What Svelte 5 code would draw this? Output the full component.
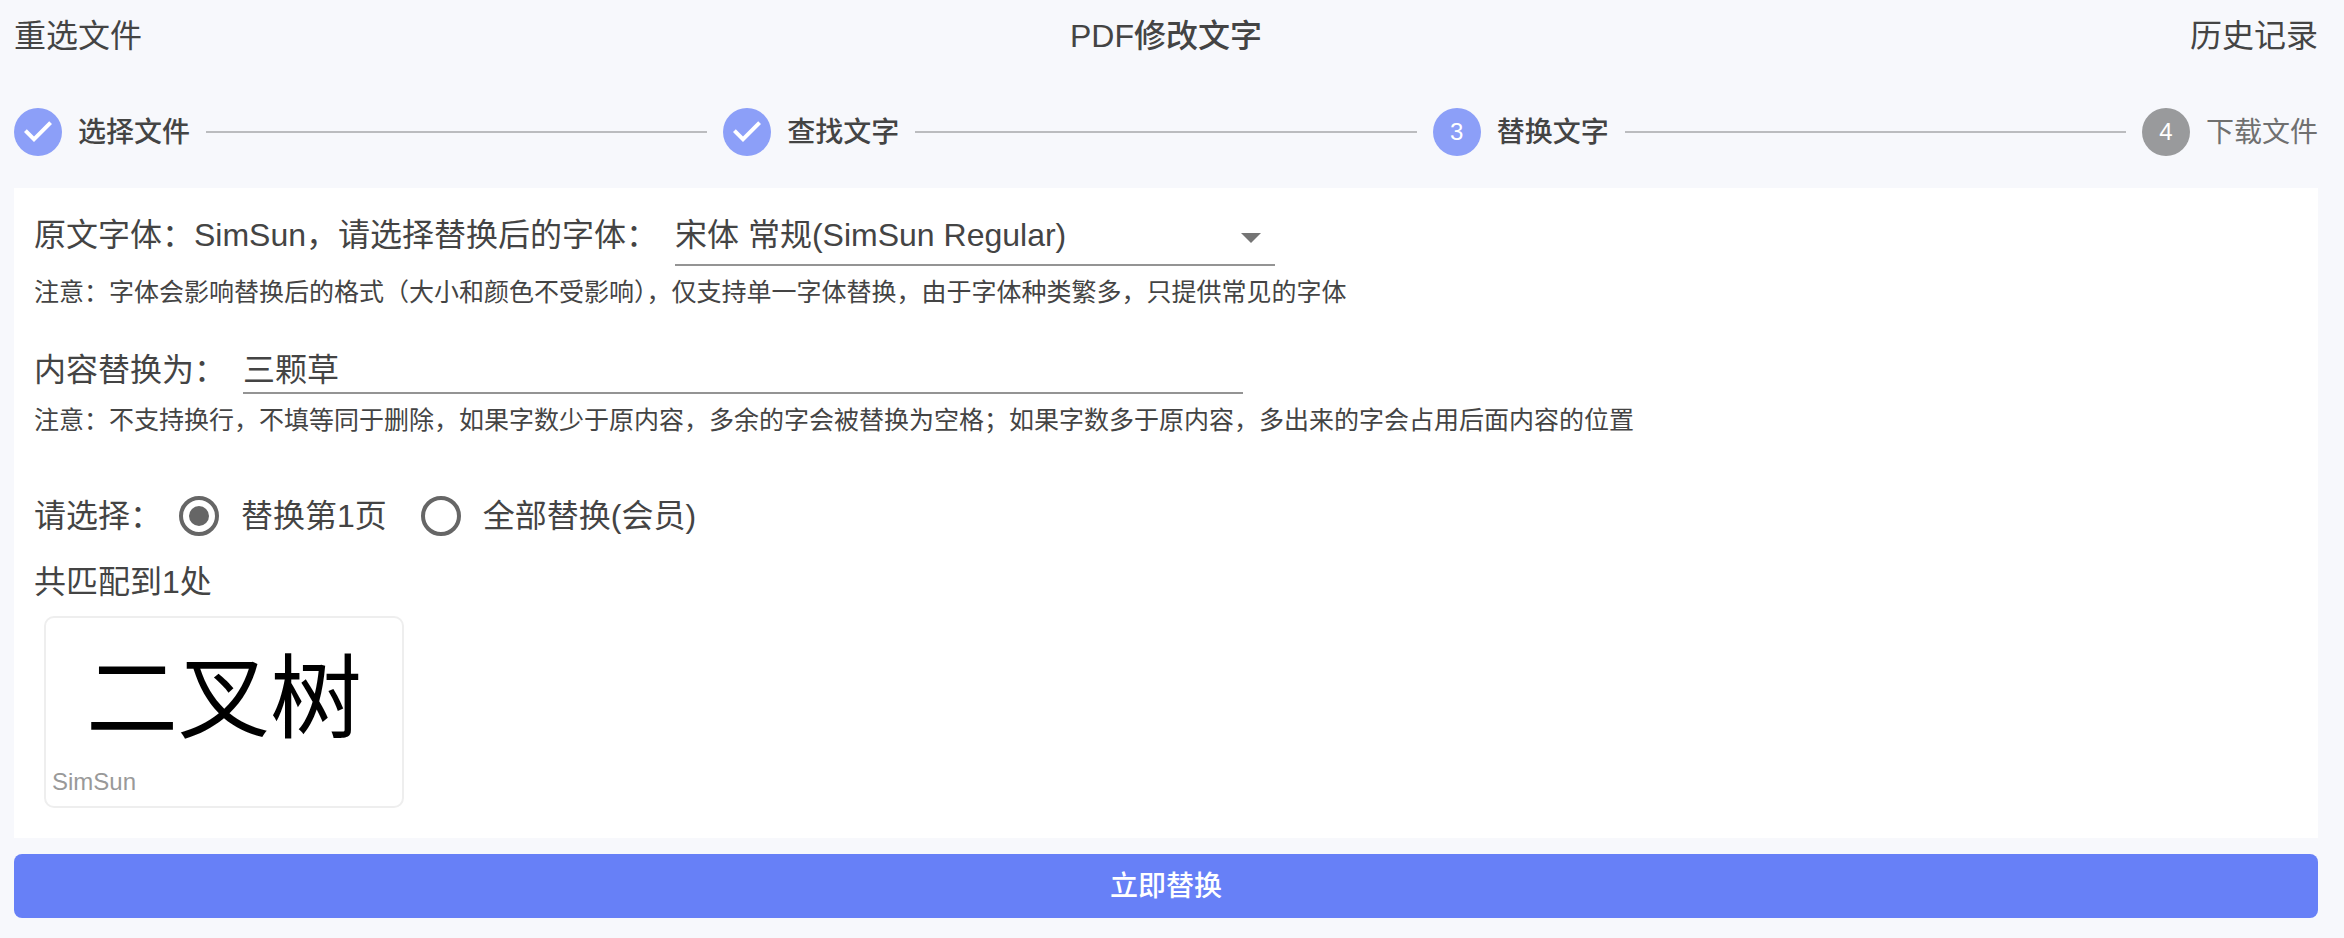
<script>
  let font = $state('simsun');
  let replacement = $state('三颗草');
  let scope = $state('page');

  const steps = [
    { label: '选择文件', state: 'done' },
    { label: '查找文字', state: 'done' },
    { label: '替换文字', state: 'active' },
    { label: '下载文件', state: 'pending' }
  ];
  const matches = [{ text: '二叉树', font: 'SimSun' }];
</script>

<div class="page">
  <header>
    <button type="button" class="link">重选文件</button>
    <h1>PDF修改文字</h1>
    <button type="button" class="link">历史记录</button>
  </header>

  <ol class="steps">
    {#each steps as step, i}
      <li class="step {step.state}">
        <span class="badge">
          {#if step.state === 'done'}
            <svg viewBox="0 0 24 24" aria-hidden="true">
              <path d="M10 17l-5-5 1.4-1.4 3.6 3.6 7.6-7.6L19 8l-9 9z" />
            </svg>
          {:else}
            {i + 1}
          {/if}
        </span>
        <span class="label">{step.label}</span>
      </li>
      {#if i < steps.length - 1}
        <li class="connector" aria-hidden="true"></li>
      {/if}
    {/each}
  </ol>

  <main>
    <div class="row">
      <label for="font">原文字体：SimSun，请选择替换后的字体：</label>
      <div class="select">
        <select id="font" bind:value={font}>
          <option value="simsun">宋体 常规(SimSun Regular)</option>
        </select>
        <svg viewBox="0 0 20 10" aria-hidden="true"><path d="M0 0h20L10 10z" /></svg>
      </div>
    </div>
    <p class="note">注意：字体会影响替换后的格式（大小和颜色不受影响），仅支持单一字体替换，由于字体种类繁多，只提供常见的字体</p>

    <div class="row content">
      <label for="replacement">内容替换为：</label>
      <input id="replacement" type="text" bind:value={replacement} />
    </div>
    <p class="note">注意：不支持换行，不填等同于删除，如果字数少于原内容，多余的字会被替换为空格；如果字数多于原内容，多出来的字会占用后面内容的位置</p>

    <div class="row scope" role="radiogroup" aria-labelledby="scope-label">
      <span id="scope-label">请选择：</span>
      <div class="options">
        <label class="option">
          <input type="radio" name="scope" value="page" bind:group={scope} />
          替换第1页
        </label>
        <label class="option">
          <input type="radio" name="scope" value="all" bind:group={scope} />
          全部替换(会员)
        </label>
      </div>
    </div>

    <p class="count">共匹配到{matches.length}处</p>
    <div class="matches">
      {#each matches as match}
        <figure>
          <div class="sample">{match.text}</div>
          <figcaption>{match.font}</figcaption>
        </figure>
      {/each}
    </div>
  </main>

  <button type="button" class="submit">立即替换</button>
</div>

<style>
  :global(body) {
    background: #f7f8fc;
  }

  .page {
    box-sizing: border-box;
    padding: 0 26px 20px 14px;
    color: #444;
    font: 400 32px/48px "Liberation Sans", "Noto Sans CJK SC", sans-serif;
  }

  button,
  input,
  select {
    font: inherit;
    color: inherit;
  }

  header {
    display: flex;
    align-items: center;
    justify-content: space-between;
    height: 72px;
  }

  h1 {
    margin: 0;
    font: inherit;
    font-weight: 500;
  }

  .link {
    padding: 0;
    border: 0;
    background: none;
    cursor: pointer;
  }

  .steps {
    display: flex;
    align-items: center;
    gap: 16px;
    margin: 0;
    padding: 36px 0 32px;
    list-style: none;
  }

  .step {
    display: flex;
    align-items: center;
    gap: 16px;
    height: 48px;
    font-size: 28px;
    font-weight: 500;
  }

  .label {
    padding-top: 2px;
  }

  .badge {
    display: grid;
    place-items: center;
    width: 48px;
    height: 48px;
    border-radius: 50%;
    background: #8c9ff8;
    color: #fff;
    font-size: 24px;
    font-weight: 400;
  }

  .badge svg {
    width: 48px;
    height: 48px;
    fill: #fff;
  }

  .pending {
    color: #707070;
    font-weight: 400;
  }

  .pending .badge {
    background: #999a9c;
  }

  .connector {
    flex: 1;
    height: 2px;
    background: #bbbcbf;
  }

  main {
    padding: 14px 20px 20px;
    background: #fff;
  }

  .row {
    display: flex;
    align-items: baseline;
    gap: 17px;
  }

  .select {
    position: relative;
    width: 600px;
  }

  select {
    display: block;
    box-sizing: border-box;
    width: 100%;
    height: 64px;
    padding: 4px 48px 0 0;
    border: 0;
    border-bottom: 2px solid #949494;
    border-radius: 0;
    background: none;
    appearance: none;
  }

  .select svg {
    position: absolute;
    right: 14px;
    top: 31px;
    width: 20px;
    height: 10px;
    fill: #757575;
    pointer-events: none;
  }

  .note {
    margin: 8px 0 0;
    font-size: 25px;
    line-height: 36px;
  }

  .content {
    margin-top: 36px;
  }

  input[type='text'] {
    box-sizing: border-box;
    width: 1000px;
    height: 46px;
    padding: 0;
    border: 0;
    border-bottom: 2px solid #949494;
    border-radius: 0;
    background: none;
  }

  .scope {
    align-items: center;
    height: 40px;
    margin-top: 58px;
  }

  .options {
    display: flex;
    gap: 34px;
  }

  .option {
    display: flex;
    align-items: center;
    gap: 22px;
  }

  input[type='radio'] {
    flex: none;
    box-sizing: border-box;
    width: 40px;
    height: 40px;
    margin: 0;
    border: 4px solid #666;
    border-radius: 50%;
    appearance: none;
  }

  input[type='radio']:checked {
    padding: 6px;
    background: #666 content-box;
  }

  .count {
    margin: 22px 0 0;
  }

  .matches {
    display: flex;
    flex-wrap: wrap;
    gap: 20px;
    padding: 10px;
  }

  figure {
    box-sizing: border-box;
    width: 360px;
    height: 192px;
    margin: 0;
    padding: 0 6px;
    border: 2px solid #eee;
    border-radius: 10px;
  }

  .sample {
    padding-top: 16px;
    color: #000;
    font-size: 92px;
    line-height: 130px;
    text-align: center;
  }

  figcaption {
    color: #999;
    font-size: 24px;
    line-height: 36px;
  }

  .submit {
    display: block;
    width: 100%;
    height: 64px;
    margin-top: 16px;
    padding: 2px 0 0;
    border: 0;
    border-radius: 8px;
    background: #6780f7;
    color: #fff;
    font-size: 28px;
    font-weight: 500;
    cursor: pointer;
  }
</style>
